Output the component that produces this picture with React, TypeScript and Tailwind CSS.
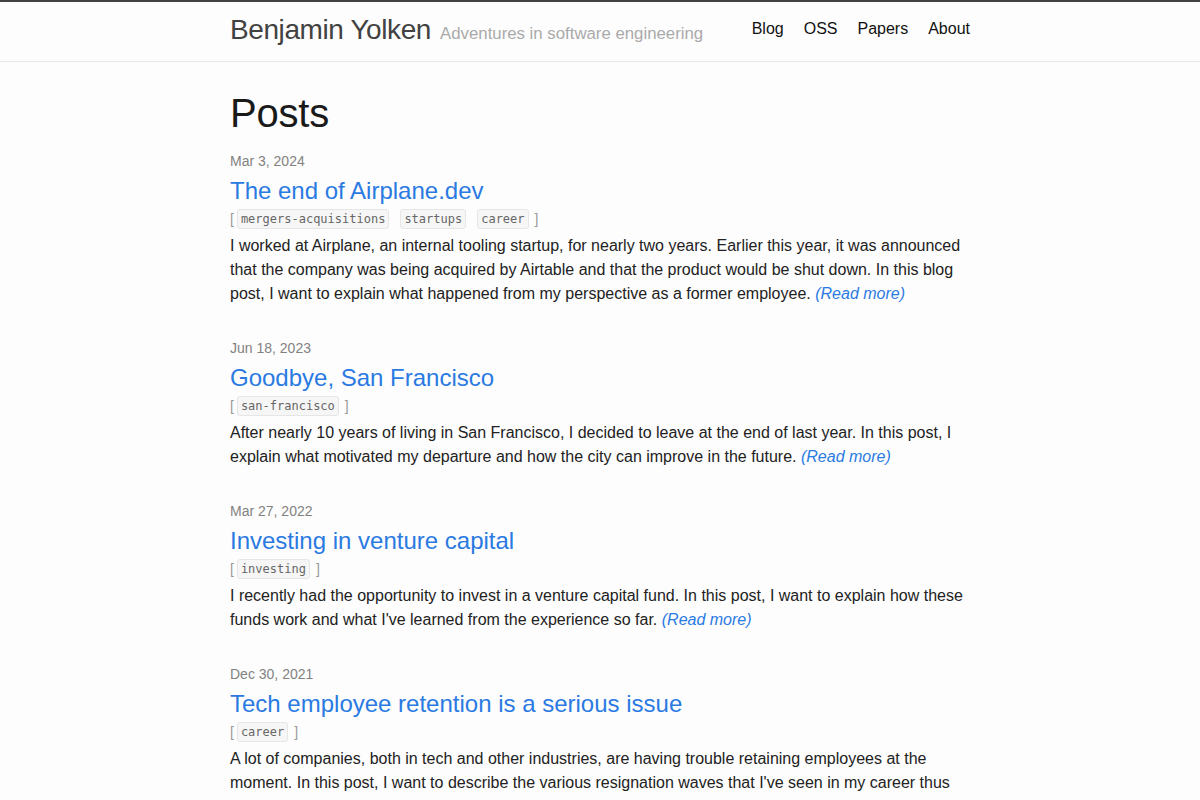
import React from "react";

type Post = {
  date: string;
  title: string;
  tags: string[];
  summary: string;
};

const posts: Post[] = [
  {
    date: "Mar 3, 2024",
    title: "The end of Airplane.dev",
    tags: ["mergers-acquisitions", "startups", "career"],
    summary:
      "I worked at Airplane, an internal tooling startup, for nearly two years. Earlier this year, it was announced that the company was being acquired by Airtable and that the product would be shut down. In this blog post, I want to explain what happened from my perspective as a former employee.",
  },
  {
    date: "Jun 18, 2023",
    title: "Goodbye, San Francisco",
    tags: ["san-francisco"],
    summary:
      "After nearly 10 years of living in San Francisco, I decided to leave at the end of last year. In this post, I explain what motivated my departure and how the city can improve in the future.",
  },
  {
    date: "Mar 27, 2022",
    title: "Investing in venture capital",
    tags: ["investing"],
    summary:
      "I recently had the opportunity to invest in a venture capital fund. In this post, I want to explain how these funds work and what I've learned from the experience so far.",
  },
  {
    date: "Dec 30, 2021",
    title: "Tech employee retention is a serious issue",
    tags: ["career"],
    summary:
      "A lot of companies, both in tech and other industries, are having trouble retaining employees at the moment. In this post, I want to describe the various resignation waves that I've seen in my career thus far and what companies can do to keep their best people.",
  },
];

const sans = { fontFamily: '"Liberation Sans", Arial, sans-serif' };
const mono = { fontFamily: '"DejaVu Sans Mono", "Liberation Mono", monospace' };

function Tag({ name }: { name: string }) {
  return (
    <code
      className="rounded-[3px] border border-[#e6e6e6] bg-[#f6f6f6] px-[3px] py-[1px] text-[12px] leading-[16px] text-[#666]"
      style={mono}
    >
      {name}
    </code>
  );
}

function PostItem({ post }: { post: Post }) {
  return (
    <li className="mb-[30px]">
      <div className="text-[14px] leading-[24px] text-[#828282]">{post.date}</div>
      <h2 className="mt-[1px] text-[24px] leading-[34px] text-[#2a7ae2]">
        <a href="#">{post.title}</a>
      </h2>
      <div className="flex h-[22px] items-center text-[14px] text-[#999]">
        <span className="mr-[3px]">[</span>
        <span className="flex items-center gap-[11px]">
          {post.tags.map((t) => (
            <Tag key={t} name={t} />
          ))}
        </span>
        <span className="ml-[6px]">]</span>
      </div>
      <p className="mt-[4px] text-[16px] leading-[24px] text-[#222]">
        {post.summary}{" "}
        <a href="#" className="italic text-[#2a7ae2]">
          (Read more)
        </a>
      </p>
    </li>
  );
}

export default function App() {
  return (
    <div className="min-h-screen bg-[#fdfdfd]" style={sans}>
      <header className="h-[62px] border-t-2 border-b border-t-[#424242] border-b-[#e8e8e8]">
        <div className="mx-auto flex h-full w-[740px] items-center justify-between pb-[6px]">
          <div className="mt-[2px] flex items-baseline">
            <a href="#" className="text-[28px] leading-[36px] tracking-[-0.4px] text-[#424242]">
              Benjamin Yolken
            </a>
            <span className="ml-[9px] text-[16.8px] text-[#aaa]">Adventures in software engineering</span>
          </div>
          <nav className="flex gap-[20px] text-[16px] text-[#111]">
            <a href="#">Blog</a>
            <a href="#">OSS</a>
            <a href="#">Papers</a>
            <a href="#">About</a>
          </nav>
        </div>
      </header>
      <main className="mx-auto w-[740px] pt-[27px]">
        <h1 className="mb-[12px] text-[40px] leading-[48px] tracking-[-0.2px] text-[#1a1a1a]">Posts</h1>
        <ul>
          {posts.map((p) => (
            <PostItem key={p.title} post={p} />
          ))}
        </ul>
      </main>
    </div>
  );
}
